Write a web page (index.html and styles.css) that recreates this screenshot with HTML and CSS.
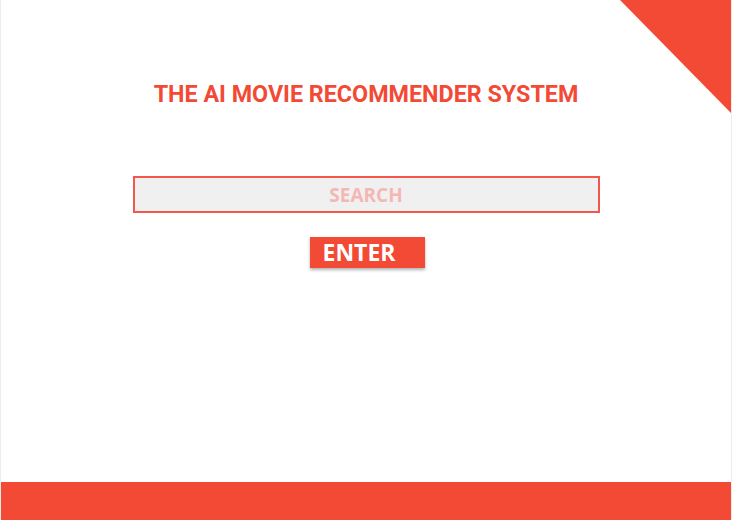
FILE: index.html
```html
<!DOCTYPE html>
<html>
<head>
<meta charset="utf-8">
<link rel="stylesheet" href="styles.css">
</head>
<body>
<div class="page">
  <div class="corner"></div>
  <main class="content">
    <h1 class="title">THE AI MOVIE RECOMMENDER SYSTEM</h1>
    <div class="search"><input class="search-input" type="text" placeholder="SEARCH"></div>
    <button class="enter">ENTER</button>
  </main>
  <footer class="footer"></footer>
</div>
</body>
</html>
```
FILE: styles.css
```css
html, body { margin: 0; padding: 0; background: #fff; }
.page {
  position: relative;
  width: 732px;
  height: 520px;
  box-sizing: border-box;
  border-left: 1px solid #ececec;
  border-right: 1px solid #ececec;
  display: flex;
  flex-direction: column;
  overflow: hidden;
}
.corner {
  position: absolute;
  top: 0;
  right: 0;
  width: 111px;
  height: 113px;
  background: #f24a35;
  clip-path: polygon(0 0, 100% 0, 100% 100%);
}
.content {
  flex: 1;
  display: flex;
  flex-direction: column;
  align-items: center;
}
.title {
  margin: 80px 0 0 0;
  font-family: Roboto, sans-serif;
  font-weight: 700;
  font-size: 23.3px;
  line-height: 28px;
  color: #f24a35;
}
.search {
  margin-top: 68px;
  width: 467px;
  height: 37px;
  box-sizing: border-box;
  border: 2px solid #f4574a;
  background: #f0f0f0;
}
.search-input {
  width: 100%;
  height: 100%;
  box-sizing: border-box;
  border: 0;
  outline: 0;
  background: transparent;
  text-align: center;
  font-family: "Open Sans", sans-serif;
  font-weight: 700;
  font-size: 19px;
  padding: 0;
}
.search-input::placeholder { color: #f4b8b4; opacity: 1; }
.enter {
  margin-top: 24px;
  margin-left: 3px;
  width: 115px;
  height: 31px;
  border: 0;
  padding: 0 17px 0 0;
  background: #f24a35;
  color: #fff;
  font-family: "Open Sans", sans-serif;
  font-weight: 700;
  font-size: 23px;
  line-height: 31px;
  box-shadow: 0 2px 3px rgba(0,0,0,0.3);
}
.footer {
  height: 38px;
  background: #f24a35;
}
```
